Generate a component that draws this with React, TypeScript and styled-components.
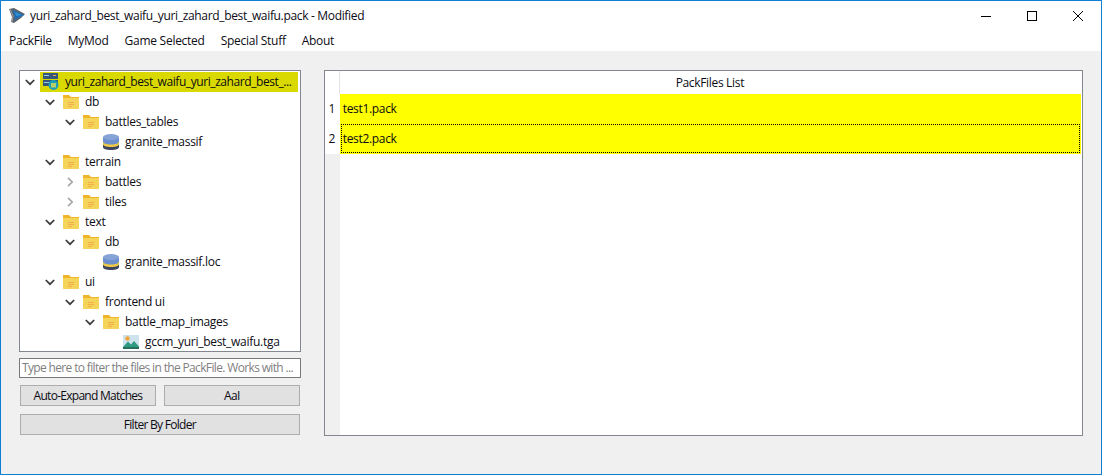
import React from "react";
import styled, { createGlobalStyle } from "styled-components";

const GlobalStyle = createGlobalStyle`
  html, body {
    margin: 0;
    padding: 0;
    background: #f0f0f0;
  }
  * {
    box-sizing: border-box;
  }
`;

const Window = styled.div`
  width: 1102px;
  height: 475px;
  border: 1px solid #0f7fd6;
  background: #f0f0f0;
  display: flex;
  flex-direction: column;
  font-family: "Open Sans", "Liberation Sans", sans-serif;
  font-size: 12px;
  letter-spacing: -0.33px;
  color: #0c0c14;
  overflow: hidden;
`;

const TitleBar = styled.div`
  height: 29px;
  background: #fff;
  display: flex;
  align-items: center;
  padding-left: 8px;
`;

const TitleText = styled.span`
  margin-left: 5px;
  flex: 1;
  white-space: nowrap;
`;

const WinButton = styled.div`
  width: 46px;
  height: 29px;
  display: flex;
  align-items: center;
  justify-content: center;
`;

const MenuBar = styled.div`
  height: 21px;
  background: #fff;
  display: flex;
  align-items: center;
  padding-bottom: 1px;
  letter-spacing: -0.27px;
`;

const MenuItem = styled.div`
  padding: 0 8px;
  white-space: nowrap;
`;

const Content = styled.div`
  flex: 1;
  display: flex;
  padding: 19px 18px 38px 18px;
  gap: 23px;
`;

const LeftColumn = styled.div`
  width: 282px;
  display: flex;
  flex-direction: column;
`;

const TreePanel = styled.div`
  height: 282px;
  border: 1px solid #828790;
  background: #fff;
  padding-top: 1px;
  overflow: hidden;
`;

const Row = styled.div<{ $depth: number }>`
  height: 20px;
  display: flex;
  align-items: center;
  padding-left: ${(p) => p.$depth * 20}px;
  padding-right: 2px;
`;

const Arrow = styled.div`
  width: 20px;
  height: 20px;
  flex: none;
  display: flex;
  align-items: center;
  justify-content: center;
`;

const RowLabel = styled.div<{ $selected?: boolean }>`
  flex: 1;
  min-width: 0;
  height: 20px;
  display: flex;
  align-items: center;
  gap: 6px;
  padding-left: 3px;
  padding-bottom: 1px;
  background: ${(p) => (p.$selected ? "#d9d900" : "transparent")};
  white-space: nowrap;
`;

const RowText = styled.span<{ $tight?: boolean }>`
  letter-spacing: ${(p) => (p.$tight ? "-0.42px" : "-0.28px")};
`;

const FilterInput = styled.div`
  height: 20px;
  margin-top: 6px;
  border: 1px solid #7a7a7a;
  background: #fff;
  color: #7f7f7f;
  padding: 0 0 1px 2px;
  display: flex;
  align-items: center;
  white-space: nowrap;
  letter-spacing: -0.65px;
`;

const ButtonRow = styled.div<{ $gapTop: number }>`
  display: flex;
  gap: 8px;
  padding: 0 1px;
  margin-top: ${(p) => p.$gapTop}px;
`;

const Button = styled.div`
  flex: 1;
  height: 21px;
  border: 1px solid #adadad;
  background: #e1e1e1;
  display: flex;
  align-items: center;
  justify-content: center;
  white-space: nowrap;
  letter-spacing: -0.72px;
`;

const TablePanel = styled.div`
  width: 760px;
  height: 366px;
  border: 1px solid #828790;
  background: #fff;
  display: grid;
  grid-template-columns: 15px 1fr;
  grid-template-rows: 23px 30px 30px 1fr;
`;

const Corner = styled.div`
  background: #fff;
  border-right: 1px solid #e4e4e4;
`;

const ColumnHeader = styled.div`
  display: flex;
  align-items: center;
  justify-content: center;
  padding-right: 2px;
`;

const RowHeader = styled.div`
  background: #fff;
  display: flex;
  align-items: center;
  justify-content: center;
  padding: 0 1px 1px 0;
`;

const Cell = styled.div`
  background: #ffff00;
  margin-right: 1px;
  padding: 0 1px 1px 1px;
  display: flex;
`;

const CellText = styled.div<{ $focused?: boolean }>`
  flex: 1;
  display: flex;
  align-items: center;
  padding: 0 0 1px 1px;
  border: 1px ${(p) => (p.$focused ? "dotted #000" : "solid transparent")};
`;

const EmptyGutter = styled.div`
  background: #f0f0f0;
`;

function AppLogo() {
  return (
    <svg width="16" height="16" viewBox="0 0 16 16" style={{ flex: "none" }}>
      <path d="M0 1 L5 0 L16 6 L12 10 L5 15 L2 14 L3 9 Z" fill="#5b636b" />
      <path d="M1 1 L4 8 L3 14" fill="none" stroke="#9aa1a8" strokeWidth="1" />
      <path d="M3 2 L15 7 L5 12 L6 8 Z" fill="#1b6fb8" />
      <path d="M6 4 L13 7 L7 8 Z" fill="#2f8fd6" />
    </svg>
  );
}

function ChevronDown() {
  return (
    <svg width="10" height="7" viewBox="0 0 10 7">
      <path d="M0.8 1 L5 5.2 L9.2 1" fill="none" stroke="#3a3a3a" strokeWidth="1.7" />
    </svg>
  );
}

function ChevronRight() {
  return (
    <svg width="7" height="10" viewBox="0 0 7 10">
      <path d="M1 0.8 L5.2 5 L1 9.2" fill="none" stroke="#a8a8a8" strokeWidth="1.7" />
    </svg>
  );
}

function FolderIcon() {
  return (
    <svg width="16" height="16" viewBox="0 0 16 16" style={{ flex: "none" }}>
      <path d="M0 1 H6 L8 3 H16 V6 H0 Z" fill="#efb52b" />
      <rect x="0" y="4" width="16" height="11" fill="#f5d45a" />
      <rect x="5" y="8" width="6" height="1" fill="#f2ae48" />
      <rect x="5" y="10" width="6" height="1" fill="#f2ae48" />
      <rect x="5" y="12" width="4" height="1" fill="#f2ae48" />
    </svg>
  );
}

function DbIcon() {
  return (
    <svg width="16" height="16" viewBox="0 0 16 16" style={{ flex: "none" }}>
      <path d="M0 9 V13 C0 15 3 16 8 16 C13 16 16 15 16 13 V9 Z" fill="#3d4560" />
      <path d="M0 7 V10 C0 12 3 13 8 13 C13 13 16 12 16 10 V7 Z" fill="#f0cb45" />
      <path d="M0 3 V7.5 C0 9.5 3 10.5 8 10.5 C13 10.5 16 9.5 16 7.5 V3 Z" fill="#6d8fce" />
      <ellipse cx="8" cy="3" rx="8" ry="3" fill="#86a3d8" />
    </svg>
  );
}

function ImageIcon() {
  return (
    <svg width="16" height="16" viewBox="0 0 16 16" style={{ flex: "none" }}>
      <rect x="0" y="1" width="16" height="14" fill="#cfe3ee" />
      <circle cx="4.5" cy="4.5" r="2.2" fill="#f2a53a" />
      <path d="M0 13 L5 7.5 L8 10.5 L11 7 L16 12.5 V14 H0 Z" fill="#2f9a82" />
      <rect x="0" y="13" width="16" height="2" fill="#27705f" />
    </svg>
  );
}

function PackIcon() {
  return (
    <svg width="16" height="17" viewBox="0 0 16 17" style={{ flex: "none" }}>
      <rect x="0" y="0" width="15" height="6" fill="#35567f" />
      <rect x="0" y="7" width="15" height="6" fill="#35567f" />
      <rect x="1" y="2" width="5" height="1" fill="#9fd0d6" />
      <rect x="1" y="9" width="5" height="1" fill="#9fd0d6" />
      <rect x="10" y="2" width="3" height="1" fill="#e9b23a" />
      <circle cx="10.5" cy="12" r="5" fill="#1f9fb5" />
      <rect x="8" y="10" width="5" height="4.5" fill="#b9cf6a" />
    </svg>
  );
}

type TreeNode = {
  name: string;
  depth: number;
  kind: "pack" | "folder" | "db" | "image";
  arrow?: "down" | "right";
  selected?: boolean;
};

const nodes: TreeNode[] = [
  { name: "yuri_zahard_best_waifu_yuri_zahard_best_...", depth: 0, kind: "pack", arrow: "down", selected: true },
  { name: "db", depth: 1, kind: "folder", arrow: "down" },
  { name: "battles_tables", depth: 2, kind: "folder", arrow: "down" },
  { name: "granite_massif", depth: 3, kind: "db" },
  { name: "terrain", depth: 1, kind: "folder", arrow: "down" },
  { name: "battles", depth: 2, kind: "folder", arrow: "right" },
  { name: "tiles", depth: 2, kind: "folder", arrow: "right" },
  { name: "text", depth: 1, kind: "folder", arrow: "down" },
  { name: "db", depth: 2, kind: "folder", arrow: "down" },
  { name: "granite_massif.loc", depth: 3, kind: "db" },
  { name: "ui", depth: 1, kind: "folder", arrow: "down" },
  { name: "frontend ui", depth: 2, kind: "folder", arrow: "down" },
  { name: "battle_map_images", depth: 3, kind: "folder", arrow: "down" },
  { name: "gccm_yuri_best_waifu.tga", depth: 4, kind: "image" },
];

function NodeIcon({ kind }: { kind: TreeNode["kind"] }) {
  if (kind === "pack") return <PackIcon />;
  if (kind === "folder") return <FolderIcon />;
  if (kind === "image") return <ImageIcon />;
  return <DbIcon />;
}

const menus = ["PackFile", "MyMod", "Game Selected", "Special Stuff", "About"];

export default function App() {
  return (
    <Window>
      <GlobalStyle />
      <TitleBar>
        <AppLogo />
        <TitleText>yuri_zahard_best_waifu_yuri_zahard_best_waifu.pack - Modified</TitleText>
        <WinButton>
          <svg width="10" height="10" viewBox="0 0 10 10">
            <path d="M0 5.5 H10" stroke="#000" strokeWidth="1" />
          </svg>
        </WinButton>
        <WinButton>
          <svg width="10" height="10" viewBox="0 0 10 10">
            <rect x="0.5" y="0.5" width="9" height="9" fill="none" stroke="#000" strokeWidth="1" />
          </svg>
        </WinButton>
        <WinButton>
          <svg width="10" height="10" viewBox="0 0 10 10">
            <path d="M0 0 L10 10 M10 0 L0 10" stroke="#000" strokeWidth="1" />
          </svg>
        </WinButton>
      </TitleBar>
      <MenuBar>
        {menus.map((m) => (
          <MenuItem key={m}>{m}</MenuItem>
        ))}
      </MenuBar>
      <Content>
        <LeftColumn>
          <TreePanel>
            {nodes.map((n) => (
              <Row key={n.name + n.depth} $depth={n.depth}>
                <Arrow>
                  {n.arrow === "down" && <ChevronDown />}
                  {n.arrow === "right" && <ChevronRight />}
                </Arrow>
                <RowLabel $selected={n.selected}>
                  <NodeIcon kind={n.kind} />
                  <RowText $tight={n.selected}>{n.name}</RowText>
                </RowLabel>
              </Row>
            ))}
          </TreePanel>
          <FilterInput>Type here to filter the files in the PackFile. Works with ...</FilterInput>
          <ButtonRow $gapTop={7}>
            <Button>Auto-Expand Matches</Button>
            <Button>AaI</Button>
          </ButtonRow>
          <ButtonRow $gapTop={8}>
            <Button>Filter By Folder</Button>
          </ButtonRow>
        </LeftColumn>
        <TablePanel>
          <Corner />
          <ColumnHeader>PackFiles List</ColumnHeader>
          <RowHeader>1</RowHeader>
          <Cell>
            <CellText>test1.pack</CellText>
          </Cell>
          <RowHeader>2</RowHeader>
          <Cell>
            <CellText $focused>test2.pack</CellText>
          </Cell>
          <EmptyGutter />
          <div />
        </TablePanel>
      </Content>
    </Window>
  );
}
